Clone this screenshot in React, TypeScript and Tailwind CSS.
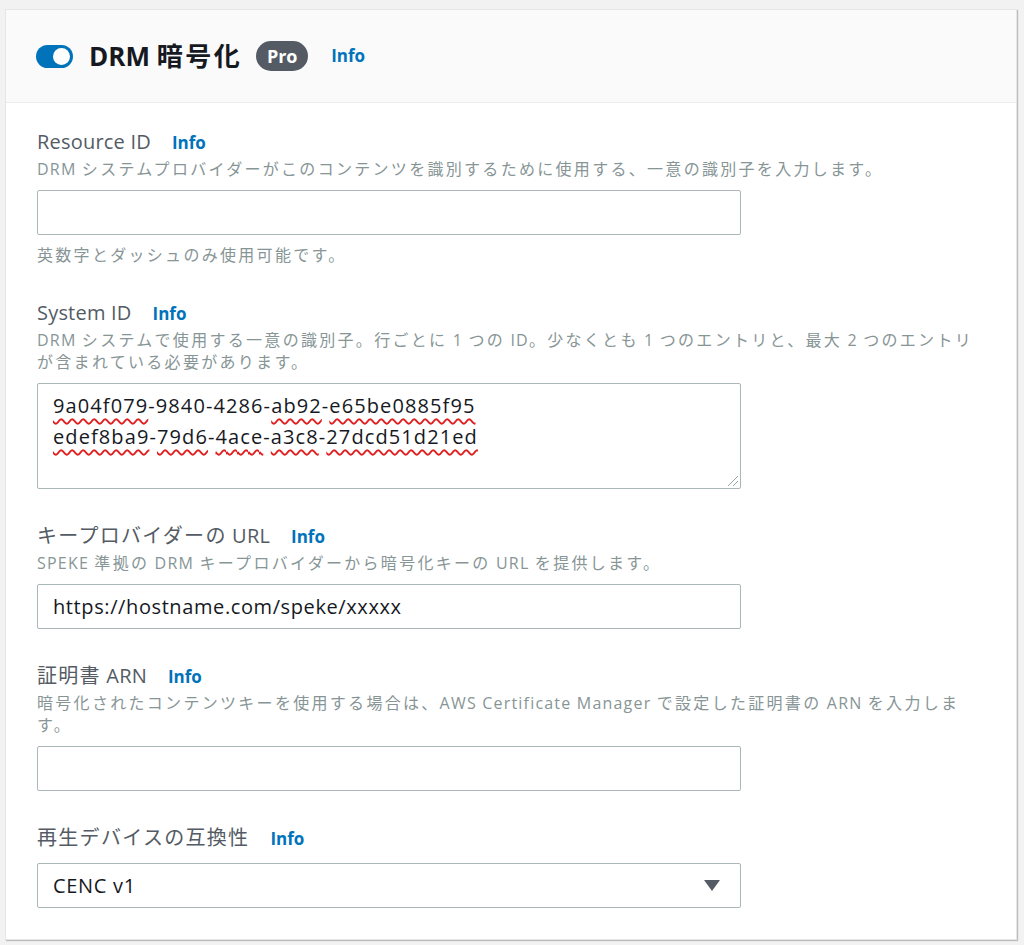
import React from "react";

const Mixed = ({ text, cjk, latin = "" }: { text: string; cjk: string; latin?: string }) => {
  const parts = text.split(/([\x00-\x7F]+)/);
  return (
    <>
      {parts.map((p, i) =>
        !p ? null : /^[\x00-\x7F]+$/.test(p) ? (
          <span key={i} className={latin}>
            {p}
          </span>
        ) : (
          <span key={i} className={cjk}>
            {p}
          </span>
        )
      )}
    </>
  );
};

const Label = ({ text }: { text: string }) => (
  <div className="flex items-baseline h-[28px] leading-[28px]">
    <span className="text-[20px] text-[#545b64]">
      <Mixed text={text} cjk="tracking-[1.3px]" latin="tracking-[0.2px]" />
    </span>
    <span className="ml-[21px] text-[17px] font-bold text-[#0073bb]">Info</span>
  </div>
);

const Desc = ({ text }: { text: string }) => (
  <p className="mt-[2px] text-[16px] leading-[22px] text-[#879596]">
    <Mixed text={text} cjk="tracking-[2.3px]" latin="tracking-[1.2px]" />
  </p>
);

const TextInput = ({ value }: { value?: string }) => (
  <input
    readOnly
    defaultValue={value ?? ""}
    className="mt-[10px] block h-[45px] w-[704px] rounded-[2px] border border-[#aab7b8] bg-white pl-[15px] text-[20px] tracking-[0.6px] text-[#16191f] outline-none"
  />
);

const Sp = ({ children }: { children: React.ReactNode }) => (
  <span className="underline decoration-wavy decoration-[#e02020] decoration-[1.5px] underline-offset-[5px]">
    {children}
  </span>
);

export default function App() {
  return (
    <div className="min-h-[945px] w-[1024px] bg-[#f2f2f2] pl-[5px] pt-[9px] font-['Open_Sans','Noto_Sans_CJK_JP',sans-serif]">
      <div className="w-[1012px] border border-[#e4e7e7] bg-white shadow-[1px_1px_1px_rgba(0,0,0,0.22)]">
        {/* header */}
        <div className="flex h-[93px] items-center border-b border-[#eaeded] bg-[#fafafa] pl-[30px]">
          <div className="flex h-[23px] w-[37px] items-center justify-end rounded-full bg-[#0073bb] pr-[3px]">
            <div className="h-[17px] w-[17px] rounded-full bg-white" />
          </div>
          <h1 className="ml-[16px] text-[26px] font-bold text-[#16191f]">
            <Mixed text="DRM 暗号化" cjk="tracking-[2.5px]" />
          </h1>
          <span className="ml-[14px] flex h-[30px] w-[52px] items-center justify-center rounded-full bg-[#545b64] text-[18px] font-bold text-white">
            Pro
          </span>
          <span className="ml-[23px] text-[17px] font-bold text-[#0073bb]">Info</span>
        </div>

        {/* body */}
        <div className="pb-[31px] pl-[31px] pr-[31px] pt-[25px]">
          {/* Resource ID */}
          <div>
            <Label text="Resource ID" />
            <Desc text="DRM システムプロバイダーがこのコンテンツを識別するために使用する、一意の識別子を入力します。" />
            <TextInput />
            <p className="mt-[9px] text-[16px] leading-[22px] text-[#879596]">
              <Mixed text="英数字とダッシュのみ使用可能です。" cjk="tracking-[2.3px]" />
            </p>
          </div>

          {/* System ID */}
          <div className="mt-[33px]">
            <Label text="System ID" />
            <Desc text="DRM システムで使用する一意の識別子。行ごとに 1 つの ID。少なくとも 1 つのエントリと、最大 2 つのエントリが含まれている必要があります。" />
            <div className="relative mt-[10px] h-[106px] w-[704px] rounded-[2px] border border-[#aab7b8] bg-white pl-[15px] pt-[6px] text-[20px] leading-[31px] tracking-[1.1px] text-[#16191f]">
              <div>
                <Sp>9a04f079</Sp>-9840-4286-<Sp>ab92</Sp>-<Sp>e65be0885f95</Sp>
              </div>
              <div>
                <Sp>edef8ba9</Sp>-<Sp>79d6</Sp>-<Sp>4ace</Sp>-<Sp>a3c8</Sp>-<Sp>27dcd51d21ed</Sp>
              </div>
              <svg
                className="absolute bottom-[1px] right-[1px]"
                width="13"
                height="13"
                viewBox="0 0 13 13"
              >
                <line x1="12" y1="2" x2="2" y2="12" stroke="#9aa5a6" strokeWidth="1" />
                <line x1="12" y1="7" x2="7" y2="12" stroke="#9aa5a6" strokeWidth="1" />
              </svg>
            </div>
          </div>

          {/* Key provider URL */}
          <div className="mt-[33px]">
            <Label text="キープロバイダーの URL" />
            <Desc text="SPEKE 準拠の DRM キープロバイダーから暗号化キーの URL を提供します。" />
            <TextInput value="https://hostname.com/speke/xxxxx" />
          </div>

          {/* Certificate ARN */}
          <div className="mt-[33px]">
            <Label text="証明書 ARN" />
            <Desc text="暗号化されたコンテンツキーを使用する場合は、AWS Certificate Manager で設定した証明書の ARN を入力します。" />
            <TextInput />
          </div>

          {/* Playback device compatibility */}
          <div className="mt-[33px]">
            <Label text="再生デバイスの互換性" />
            <div className="mt-[11px] flex h-[45px] w-[704px] items-center justify-between rounded-[2px] border border-[#aab7b8] bg-white pl-[15px] pr-[20px] text-[20px] tracking-[0.7px] text-[#16191f]">
              <span>CENC v1</span>
              <svg width="16" height="11" viewBox="0 0 16 11">
                <polygon points="0,0 16,0 8,11" fill="#545b64" />
              </svg>
            </div>
          </div>
        </div>
      </div>
    </div>
  );
}
